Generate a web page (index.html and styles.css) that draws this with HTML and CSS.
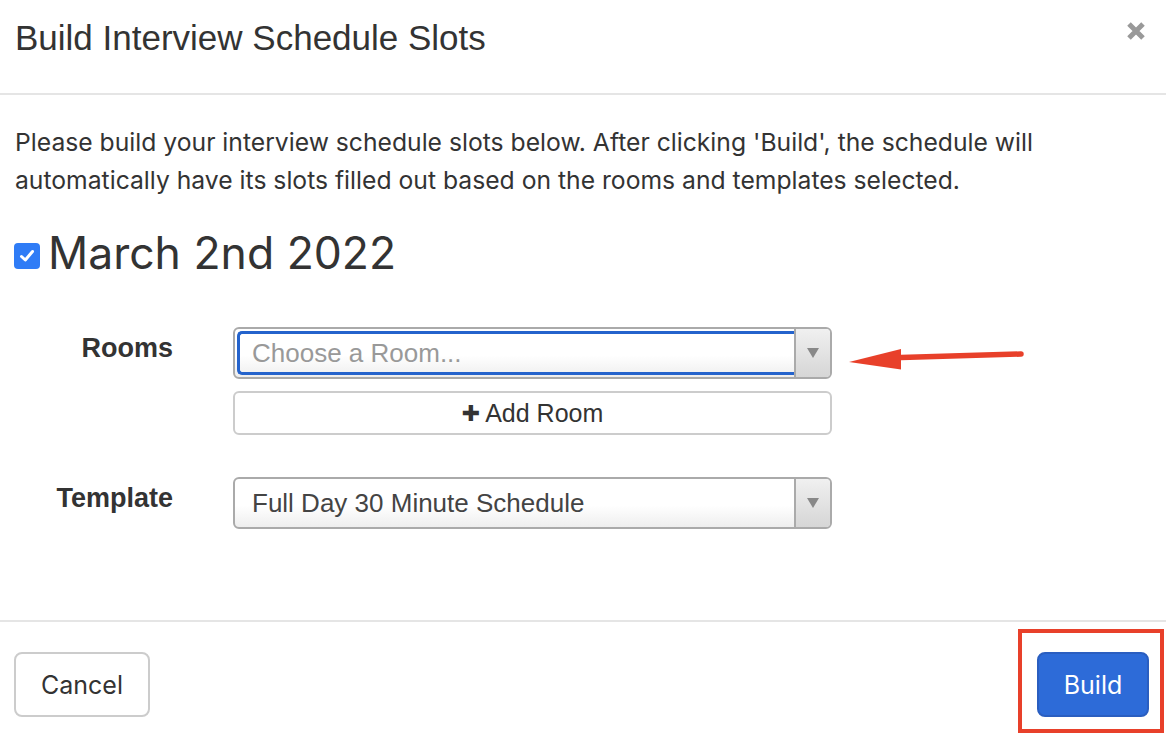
FILE: index.html
```html
<!DOCTYPE html>
<html>
<head>
<meta charset="utf-8">
<link rel="stylesheet" href="styles.css">
</head>
<body>
<div class="modal">
  <div class="modal-header">
    <h4 class="modal-title">Build Interview Schedule Slots</h4>
    <button class="close" aria-label="Close">
      <svg width="20" height="20" viewBox="0 0 20 20"><path d="M3 3 L17 17 M17 3 L3 17" stroke="#999" stroke-width="5" stroke-linecap="butt"/></svg>
    </button>
  </div>
  <div class="modal-body">
    <p class="intro">Please build your interview schedule slots below. After clicking 'Build', the schedule will automatically have its slots filled out based on the rooms and templates selected.</p>
    <div class="date-row">
      <span class="checkbox"><svg width="18" height="18" viewBox="0 0 18 18"><path d="M3.5 9.5 L7.3 13 L14.5 4.5" fill="none" stroke="#fff" stroke-width="3" stroke-linecap="round" stroke-linejoin="round"/></svg></span>
      <h2 class="date">March 2nd 2022</h2>
    </div>
    <div class="form">
      <label class="label">Rooms</label>
      <div class="control">
        <div class="select focused">
          <span class="value placeholder">Choose a Room...</span>
          <span class="arrow"><span class="tri"></span></span>
        </div>
        <button class="add-btn"><span class="plus">&#10010;</span>Add Room</button>
      </div>
      <label class="label label-template">Template</label>
      <div class="control control-template">
        <div class="select">
          <span class="value">Full Day 30 Minute Schedule</span>
          <span class="arrow"><span class="tri"></span></span>
        </div>
      </div>
    </div>
  </div>
  <div class="modal-footer">
    <button class="btn btn-default">Cancel</button>
    <button class="btn btn-primary">Build</button>
  </div>
  <div class="annot-box"></div>
  <svg class="annot-arrow" width="180" height="30" viewBox="0 0 180 30">
    <path d="M52 12.5 L172 9" stroke="#e8402a" stroke-width="5.5" stroke-linecap="round" fill="none"/>
    <path d="M0 17 L52 4 L52 24.5 Z" fill="#e8402a"/>
  </svg>
</div>
</body>
</html>
```
FILE: styles.css
```css
* { box-sizing: border-box; }
html, body { margin: 0; padding: 0; background: #fff; }
body {
  font-family: "Liberation Sans", Arial, sans-serif;
  color: #333;
  width: 1166px;
  height: 736px;
  overflow: hidden;
}
.modal { position: relative; width: 1166px; height: 736px; }
.modal-header {
  display: flex;
  justify-content: space-between;
  align-items: flex-start;
  height: 95px;
  padding: 18px 20px 0 15px;
  border-bottom: 2px solid #e5e5e5;
}
.modal-title {
  margin: 0;
  font-size: 35px;
  font-weight: normal;
  line-height: 40px;
  color: #333;
}
.close {
  border: 0;
  background: none;
  padding: 0;
  margin-top: 3px;
  width: 20px;
  height: 20px;
}
.close svg { display: block; }
.modal-body { padding: 28px 15px 0 15px; height: 527px; border-bottom: 2px solid #e5e5e5; }
.intro {
  margin: 0;
  font-family: "Inter", "Liberation Sans", sans-serif;
  font-size: 24.7px;
  line-height: 38px;
  color: #333;
}
.date-row {
  display: flex;
  align-items: center;
  margin-top: 29px;
  margin-left: -1px;
}
.checkbox {
  width: 26px;
  height: 26px;
  border-radius: 4px;
  background: #2f7cf6;
  display: flex;
  align-items: center;
  justify-content: center;
  margin-right: 8px;
  margin-top: 5px;
}
.checkbox svg { display: block; }
.date {
  margin: 0;
  font-family: "Inter", "Liberation Sans", sans-serif;
  font-size: 44.5px;
  font-weight: normal;
  line-height: 50px;
  color: #333;
}
.form {
  display: grid;
  grid-template-columns: 158px 599px;
  column-gap: 60px;
  row-gap: 42px;
  margin-top: 49px;
}
.label {
  text-align: right;
  font-weight: bold;
  font-size: 27px;
  line-height: 30px;
  padding-top: 6px;
  color: #333;
}
.control { display: flex; flex-direction: column; gap: 12px; }
.select {
  position: relative;
  display: flex;
  height: 52px;
  border: 2px solid #aaa;
  border-radius: 6px;
  background: linear-gradient(#fff 0%, #fff 55%, #eee 100%);
  overflow: hidden;
}
.select .value {
  flex: 1;
  font-size: 26px;
  line-height: 48px;
  padding-left: 17px;
  color: #444;
  white-space: nowrap;
}
.select .placeholder { color: #999; }
.select.focused .value {
  margin: 2px 0 2px 2px;
  border: 3px solid #2463cc;
  border-right: 0;
  border-radius: 5px 0 0 5px;
  line-height: 38px;
  padding-left: 12px;
}
.arrow {
  width: 36px;
  border-left: 2px solid #aaa;
  background: linear-gradient(#f0f0f0, #d6d6d6);
  display: flex;
  align-items: center;
  justify-content: center;
}
.tri {
  width: 0; height: 0;
  border-left: 6px solid transparent;
  border-right: 6px solid transparent;
  border-top: 10px solid #888;
}
.add-btn {
  height: 44px;
  border: 2px solid #ccc;
  border-radius: 6px;
  background: #fff;
  font-family: "Liberation Sans", Arial, sans-serif;
  font-size: 25px;
  color: #333;
  display: flex;
  align-items: center;
  justify-content: center;
  padding: 0;
}
.plus { font-size: 22px; margin-right: 5px; font-family: "DejaVu Sans", sans-serif; }
.modal-footer {
  display: flex;
  justify-content: space-between;
  padding: 30px 17px 0 14px;
}
.btn {
  height: 65px;
  border-radius: 8px;
  font-family: "Inter", "Liberation Sans", sans-serif;
  font-size: 25px;
  padding: 0;
}
.btn-default {
  width: 136px;
  border: 2px solid #ccc;
  background: #fff;
  color: #333;
}
.btn-primary {
  width: 112px;
  border: 2px solid #2a5ec0;
  background: #2d6bd8;
  color: #fff;
}
.annot-box {
  position: absolute;
  left: 1018px;
  top: 629px;
  width: 146px;
  height: 104px;
  border: 4px solid #e8402a;
}
.annot-arrow {
  position: absolute;
  left: 849px;
  top: 345px;
}
```
